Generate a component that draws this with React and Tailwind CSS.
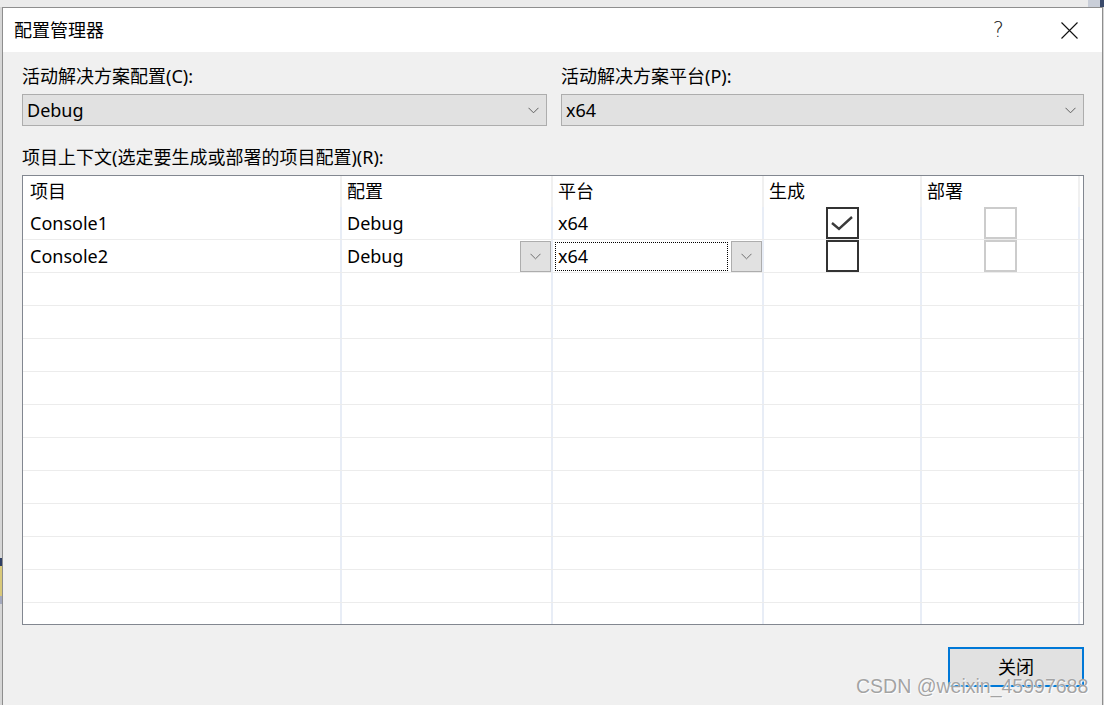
import React from 'react';

const font = { fontFamily: '"Noto Sans", "Noto Sans CJK SC", sans-serif' };

const Chevron = ({ color = '#5f5f5f' }) => (
  <svg width="11" height="7" viewBox="0 0 11 7" fill="none">
    <path d="M0.5 0.8 L5.5 5.8 L10.5 0.8" stroke={color} strokeWidth="1" />
  </svg>
);

const Combo = ({ value, width }) => (
  <div
    className={`h-[32px] ${width} flex items-center justify-between bg-[#e1e1e1] border border-[#adadad] pl-[4px] pr-[7px]`}
  >
    <span className="text-[18px] leading-none text-black">{value}</span>
    <Chevron />
  </div>
);

const DropButton = () => (
  <div className="w-[31px] h-[31px] mt-[1px] self-start flex items-center justify-center bg-[#e1e1e1] border border-[#adadad]">
    <Chevron color="#6f6f6f" />
  </div>
);

const CheckBox = ({ checked, disabled }) => (
  <div
    className={`w-[33px] h-[32px] border-2 flex items-center justify-center ${
      disabled ? 'border-[#cccccc]' : 'border-[#333333]'
    }`}
  >
    {checked && (
      <svg width="26" height="20" viewBox="0 0 26 20" fill="none">
        <path d="M3 10 L10 16 L23 4" stroke="#3a3a3a" strokeWidth="2.4" />
      </svg>
    )}
  </div>
);

const cols = 'grid grid-cols-[319px_211px_211px_158px_158px_1fr]';
const headCell = 'border-r-2 border-[#f0f0f0] pl-[5px] flex items-center';
const cell = 'border-r-2 border-[#e8edf6] flex items-center';

const projects = [
  { name: 'Console1', config: 'Debug', platform: 'x64', build: true, editable: false },
  { name: 'Console2', config: 'Debug', platform: 'x64', build: false, editable: true },
];

export default function App() {
  const emptyRows = Array.from({ length: 12 });

  return (
    <div className="relative w-[1104px] h-[705px] overflow-hidden bg-[#ebebeb] flex flex-col" style={font}>
      <div className="h-[7px] flex justify-end">
        <div className="w-[12px] bg-[#c9ced8]" />
        <div className="w-[4px] bg-[#3a4a6b]" />
      </div>
      <div className="flex flex-1">
        <div className="w-[2px] flex flex-col">
          <div className="h-[551px] bg-[#d6d6d6]" />
          <div className="h-[8px] bg-[#2f3f63]" />
          <div className="h-[30px] bg-[#d9c97a]" />
          <div className="h-[8px] bg-[#a4a9bd]" />
          <div className="flex-1 bg-[#d6d6d6]" />
        </div>

        <div className="w-[1101px] flex flex-col border-t border-l border-r border-[#8e8e8e] bg-[#f0f0f0]">
          <div className="h-[44px] bg-white flex items-center pl-[11px] pr-[24px]">
            <span className="text-[18px] text-black">配置管理器</span>
            <span
              className="ml-auto text-[21px] leading-none text-[#222]"
              style={{ fontFamily: '"DejaVu Sans", sans-serif', fontWeight: 200 }}
            >
              ?
            </span>
            <svg className="ml-[57px]" width="17" height="17" viewBox="0 0 17 17" fill="none">
              <path d="M0.5 0.5 L16.5 16.5 M16.5 0.5 L0.5 16.5" stroke="#111" strokeWidth="1.1" />
            </svg>
          </div>

          <div className="flex-1 pt-[12px] pl-[19px]">
            <div className="flex gap-[14px]">
              <div className="flex flex-col">
                <div className="h-[24px] leading-[24px] text-[18px] text-black">活动解决方案配置(C):</div>
                <div className="mt-[6px]">
                  <Combo value="Debug" width="w-[525px]" />
                </div>
              </div>
              <div className="flex flex-col">
                <div className="h-[24px] leading-[24px] text-[18px] text-black">活动解决方案平台(P):</div>
                <div className="mt-[6px]">
                  <Combo value="x64" width="w-[523px]" />
                </div>
              </div>
            </div>

            <div className="mt-[19px] h-[24px] leading-[24px] text-[18px] text-black">
              项目上下文(选定要生成或部署的项目配置)(R):
            </div>

            <div className="mt-[6px] w-[1062px] h-[450px] border border-[#828790] bg-white overflow-hidden text-[18px] text-black">
              <div className={`${cols} h-[31px]`}>
                <div className={`${headCell} pl-[7px]`}>项目</div>
                <div className={headCell}>配置</div>
                <div className={headCell}>平台</div>
                <div className={headCell}>生成</div>
                <div className={headCell}>部署</div>
                <div />
              </div>

              {projects.map((p) => (
                <div key={p.name} className={`${cols} h-[33px] border-b border-[#ececec]`}>
                  <div className={`${cell} pl-[7px]`}>{p.name}</div>
                  <div className={`${cell} pl-[5px] justify-between`}>
                    <span>{p.config}</span>
                    {p.editable && <DropButton />}
                  </div>
                  <div className={`${cell} ${p.editable ? 'pl-[2px]' : 'pl-[5px]'}`}>
                    {p.editable ? (
                      <>
                        <div className="w-[173px] h-[29px] mt-[2px] self-start border border-dotted border-black pl-[2px] flex items-center">
                          x64
                        </div>
                        <div className="ml-[3px] flex self-stretch">
                          <DropButton />
                        </div>
                      </>
                    ) : (
                      p.platform
                    )}
                  </div>
                  <div className={`${cell} justify-center items-start`}>
                    <CheckBox checked={p.build} />
                  </div>
                  <div className={`${cell} justify-center items-start`}>
                    <CheckBox disabled />
                  </div>
                  <div />
                </div>
              ))}

              {emptyRows.map((_, i) => (
                <div key={i} className={`${cols} h-[33px] border-b border-[#ececec]`}>
                  <div className={cell} />
                  <div className={cell} />
                  <div className={cell} />
                  <div className={cell} />
                  <div className={cell} />
                  <div />
                </div>
              ))}
            </div>

            <div className="w-[1062px] mt-[22px] flex justify-end">
              <button className="w-[136px] h-[40px] border-2 border-[#0078d7] bg-[#e1e1e1] text-[18px] text-black flex items-center justify-center">
                关闭
              </button>
            </div>
          </div>
        </div>
        <div className="flex-1 bg-[#d6d6d6]" />
      </div>

      <div
        className="absolute left-[856px] top-[673px] text-[19.5px] leading-[26px] text-[#a3a3a3] whitespace-nowrap pointer-events-none"
        style={{ fontFamily: '"Liberation Sans", Arial, sans-serif', textShadow: '0 0 1px #ffffff, 1px 1px 1px #ffffff' }}
      >
        CSDN @weixin_45997688
      </div>
    </div>
  );
}
